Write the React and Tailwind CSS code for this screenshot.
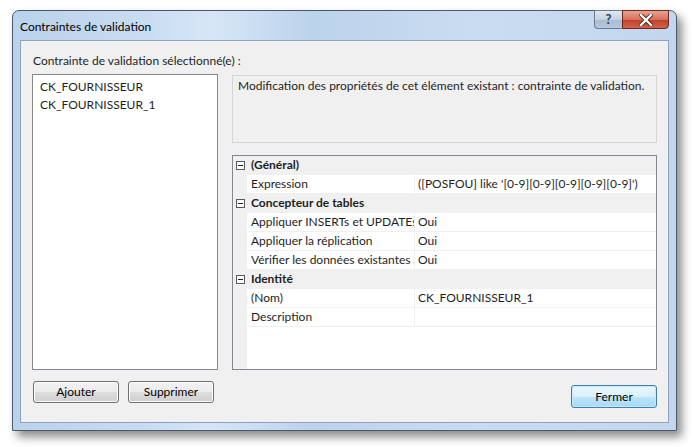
import React from 'react';

const ROWS = [
  { cat: '(Général)' },
  { name: 'Expression', value: "([POSFOU] like '[0-9][0-9][0-9][0-9][0-9]')" },
  { cat: 'Concepteur de tables' },
  { name: 'Appliquer INSERTs et UPDATEs', value: 'Oui' },
  { name: 'Appliquer la réplication', value: 'Oui' },
  { name: 'Vérifier les données existantes à la création', value: 'Oui' },
  { cat: 'Identité' },
  { name: '(Nom)', value: 'CK_FOURNISSEUR_1' },
  { name: 'Description', value: '' },
];

const Toggle = () => (
  <span className="w-[9px] h-[9px] border border-[#5a5a5a] bg-white flex items-center justify-center">
    <span className="w-[5px] h-px bg-[#222]" />
  </span>
);

const Button = ({ children, className = '', primary }) => (
  <button
    className={`h-[22px] w-[86px] rounded-[3px] border text-[12px] font-normal text-black ${
      primary
        ? 'border-[#3c7fb1] bg-[linear-gradient(#eaf6fd,#d9f0fc_50%,#bee6fd_50%,#a7d9f5)] shadow-[inset_0_0_0_1px_#c7e9fb]'
        : 'border-[#707070] bg-[linear-gradient(#f2f2f2,#ebebeb_50%,#dddddd_50%,#cfcfcf)] shadow-[inset_0_0_0_1px_#fcfcfc]'
    } ${className}`}
  >
    {children}
  </button>
);

export default function App() {
  return (
    <div
      className="w-[694px] h-[447px] bg-white pl-[12px] pt-[10px] text-[12px] text-[#1e1e1e]"
      style={{ fontFamily: 'Lato, "Segoe UI", sans-serif' }}
    >
      <div className="w-[665px] h-[421px] flex flex-col rounded-t-[7px] border border-[#4a5a6c] shadow-[5px_6px_10px_rgba(0,0,0,0.45)] bg-[linear-gradient(90deg,#bad2ec,#c9dcf1_20%,#d7e6f6_30%,#bcd3ec_45%,#cadcf1_70%,#c2d7ee)]">
        {/* Title bar */}
        <div className="h-[29px] flex items-start pl-[7px] pr-[7px]">
          <span className="mt-[7px] text-[12px] text-black">Contraintes de validation</span>
          <div className="ml-auto flex -mt-px">
            <div className="w-[28px] h-[19px] rounded-bl-[4px] border border-[#6b7a8c] border-r-0 bg-[linear-gradient(#dfe8f2,#c4d2e2_50%,#a9bbd0_50%,#b7c8db)] flex items-center justify-center text-[13px] font-bold text-[#2c3b4c] leading-none">
              ?
            </div>
            <div className="w-[47px] h-[19px] rounded-br-[4px] border border-[#6a2a20] bg-[linear-gradient(#e8a493,#d6705a_50%,#c0402a_50%,#d2604a)] flex items-center justify-center">
              <svg width="14" height="12" viewBox="0 0 14 12">
                <path d="M2 1 L12 11 M12 1 L2 11" stroke="#4a1a12" strokeWidth="4" strokeLinecap="square" />
                <path d="M2 1 L12 11 M12 1 L2 11" stroke="#fff" strokeWidth="2.4" strokeLinecap="square" />
              </svg>
            </div>
          </div>
        </div>

        {/* Client area */}
        <div className="flex-1 mx-[7px] mb-[7px] border border-[#8ea3b9] bg-[#f0f0f0] flex flex-col pl-[11px] pr-[11px] pt-[12px]">
          <div className="h-[16px] leading-[16px] pl-px whitespace-nowrap">Contrainte de validation sélectionné(e) :</div>
          <div className="flex mt-[5px] gap-[14px]">
            <div className="w-[186px] h-[296px] border border-[#828790] bg-white pt-[3px] pl-[7px] leading-[18px]">
              <div>CK_FOURNISSEUR</div>
              <div>CK_FOURNISSEUR_1</div>
            </div>
            <div className="w-[425px] flex flex-col pt-px">
              <div className="h-[68px] border border-[#d5d5d5] px-[5px] pt-[1px] leading-[18px] whitespace-nowrap">
                Modification des propriétés de cet élément existant : contrainte de validation.
              </div>
              <div className="mt-[12px] h-[215px] border border-[#828790] bg-white flex flex-col">
                {ROWS.map((r, i) =>
                  r.cat ? (
                    <div key={i} className="h-[19px] flex items-center bg-[#f0f0f0] border-b border-[#f0f0f0]">
                      <div className="w-[14px] flex justify-center pl-px">
                        <Toggle />
                      </div>
                      <span className="pl-[4px] font-bold whitespace-nowrap">{r.cat}</span>
                    </div>
                  ) : (
                    <div key={i} className="h-[19px] flex">
                      <div className="w-[14px] bg-[#f0f0f0]" />
                      <div className="w-[168px] pl-[4px] border-b border-r border-[#f0f0f0] overflow-hidden whitespace-nowrap leading-[18px]">
                        {r.name}
                      </div>
                      <div className="flex-1 pl-[3px] border-b border-[#f0f0f0] whitespace-nowrap leading-[18px]">
                        {r.value}
                      </div>
                    </div>
                  )
                )}
                <div className="flex-1 flex">
                  <div className="w-[14px] bg-[#f0f0f0]" />
                </div>
              </div>
            </div>
          </div>
          <div className="flex items-start mt-[11px]">
            <Button className="ml-px">Ajouter</Button>
            <Button className="ml-[9px] w-[85px]">Supprimer</Button>
            <Button primary className="ml-auto mt-[4px] h-[23px]">Fermer</Button>
          </div>
        </div>
      </div>
    </div>
  );
}
